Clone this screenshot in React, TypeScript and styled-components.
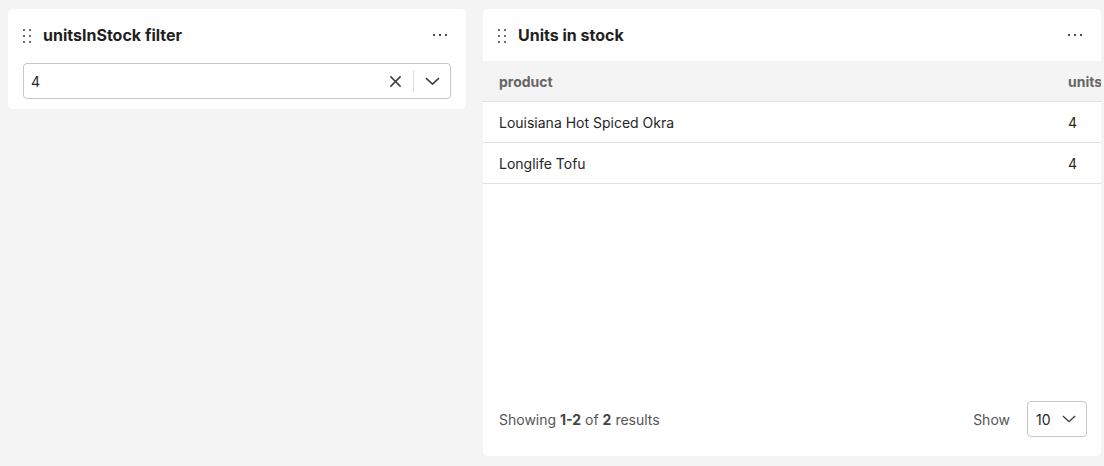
import React from 'react'
import styled, { createGlobalStyle } from 'styled-components'

const GlobalStyle = createGlobalStyle`
  html, body {
    margin: 0;
    padding: 0;
    background: #f4f4f4;
    font-family: Inter, Roboto, "Liberation Sans", Arial, sans-serif;
    color: #262626;
  }
`

const rows = [
  { product: 'Louisiana Hot Spiced Okra', units: 4 },
  { product: 'Longlife Tofu', units: 4 },
]

const DragHandle = () => (
  <svg width="10" height="14" viewBox="0 0 10 14">
    {[0, 6, 12].map((y) =>
      [0, 6].map((x) => <rect key={`${x}-${y}`} x={x + 1} y={y} width="2" height="2" fill="#6f6f6f" />)
    )}
  </svg>
)

const MoreDots = () => (
  <svg width="14" height="4" viewBox="0 0 14 4">
    {[0, 6, 12].map((x) => (
      <rect key={x} x={x} y="1" width="2" height="2" fill="#4a4a4a" />
    ))}
  </svg>
)

const ClearIcon = () => (
  <svg width="13" height="13" viewBox="0 0 14 14" fill="none" stroke="#3d3d3d" strokeWidth="1.6">
    <path d="M1.5 1.5 L12.5 12.5 M12.5 1.5 L1.5 12.5" />
  </svg>
)

const Chevron = ({ size = 15 }: { size?: number }) => (
  <svg width={size} height={size * 0.55} viewBox="0 0 15 8" fill="none" stroke="#3d3d3d" strokeWidth="1.5">
    <path d="M1 1 L7.5 7 L14 1" />
  </svg>
)

const App: React.FC = () => {
  return (
    <>
      <GlobalStyle />
      <Page>
        <FilterCard>
          <CardHeader>
            <HandleWrap><DragHandle /></HandleWrap>
            <CardTitle>unitsInStock filter</CardTitle>
            <MoreButton><MoreDots /></MoreButton>
          </CardHeader>
          <FilterBody>
            <SelectBox>
              <SelectValue>4</SelectValue>
              <IconButton><ClearIcon /></IconButton>
              <Divider />
              <IconButton><Chevron /></IconButton>
            </SelectBox>
          </FilterBody>
        </FilterCard>

        <TableCard>
          <CardHeader>
            <HandleWrap><DragHandle /></HandleWrap>
            <CardTitle>Units in stock</CardTitle>
            <MoreButton><MoreDots /></MoreButton>
          </CardHeader>
          <TableScroll>
            <Table>
              <thead>
                <tr>
                  <HeadCell>product</HeadCell>
                  <HeadCell>units</HeadCell>
                </tr>
              </thead>
              <tbody>
                {rows.map((r) => (
                  <tr key={r.product}>
                    <BodyCell>{r.product}</BodyCell>
                    <BodyCell>{r.units}</BodyCell>
                  </tr>
                ))}
              </tbody>
            </Table>
          </TableScroll>
          <Footer>
            <Summary>
              Showing <b>1-2</b> of <b>2</b> results
            </Summary>
            <ShowLabel>Show</ShowLabel>
            <PageSize>
              <span>10</span>
              <Chevron size={14} />
            </PageSize>
          </Footer>
        </TableCard>
      </Page>
    </>
  )
}

const Page = styled.div`
  display: flex;
  align-items: flex-start;
  gap: 17px;
  padding: 9px 0 0 8px;
  height: 466px;
  box-sizing: border-box;
  overflow: hidden;
`

const Card = styled.div`
  background: #fff;
  border-radius: 5px;
  display: flex;
  flex-direction: column;
  overflow: hidden;
`

const FilterCard = styled(Card)`
  width: 458px;
  height: 100px;
`

const TableCard = styled(Card)`
  width: 618px;
  height: 447px;
`

const CardHeader = styled.div`
  display: flex;
  align-items: center;
  height: 52px;
  padding: 0 19px 0 14px;
  flex-shrink: 0;
`

const HandleWrap = styled.div`
  display: flex;
  width: 10px;
  margin-right: 11px;
  margin-top: 1px;
`

const CardTitle = styled.div`
  flex: 1;
  font-size: 16px;
  font-weight: 700;
  color: #1f1f1f;
`

const MoreButton = styled.div`
  display: flex;
  align-items: center;
`

const FilterBody = styled.div`
  padding: 2px 15px 0 15px;
`

const SelectBox = styled.div`
  display: flex;
  align-items: center;
  height: 36px;
  box-sizing: border-box;
  border: 1px solid #c6c6c6;
  border-radius: 4px;
  padding: 0 8px 0 7px;
`

const SelectValue = styled.div`
  flex: 1;
  font-size: 14px;
  color: #262626;
`

const IconButton = styled.div`
  display: flex;
  align-items: center;
  justify-content: center;
  width: 20px;
`

const Divider = styled.div`
  width: 1px;
  height: 22px;
  background: #e0e0e0;
  margin: 0 8px;
`

const TableScroll = styled.div`
  overflow: hidden;
  flex: 1;
`

const Table = styled.table`
  border-collapse: collapse;
  width: 640px;
  table-layout: fixed;
  font-size: 14px;
`

const HeadCell = styled.th`
  text-align: left;
  height: 40px;
  padding: 0 0 0 16px;
  background: #f4f4f4;
  color: #666;
  font-weight: 700;
  border-bottom: 1px solid #e0e0e0;
  &:first-child {
    width: 553px;
  }
`

const BodyCell = styled.td`
  height: 40px;
  padding: 0 0 0 16px;
  color: #262626;
  border-bottom: 1px solid #e0e0e0;
`

const Footer = styled.div`
  display: flex;
  align-items: center;
  padding: 0 14px 19px 16px;
  font-size: 14px;
  color: #555;
`

const Summary = styled.div`
  flex: 1;
  b {
    font-weight: 700;
    color: #444;
  }
`

const ShowLabel = styled.div`
  margin-right: 17px;
`

const PageSize = styled.div`
  display: flex;
  align-items: center;
  justify-content: space-between;
  width: 60px;
  height: 36px;
  box-sizing: border-box;
  border: 1px solid #c6c6c6;
  border-radius: 4px;
  padding: 0 10px 0 8px;
  color: #262626;
`

export default App
